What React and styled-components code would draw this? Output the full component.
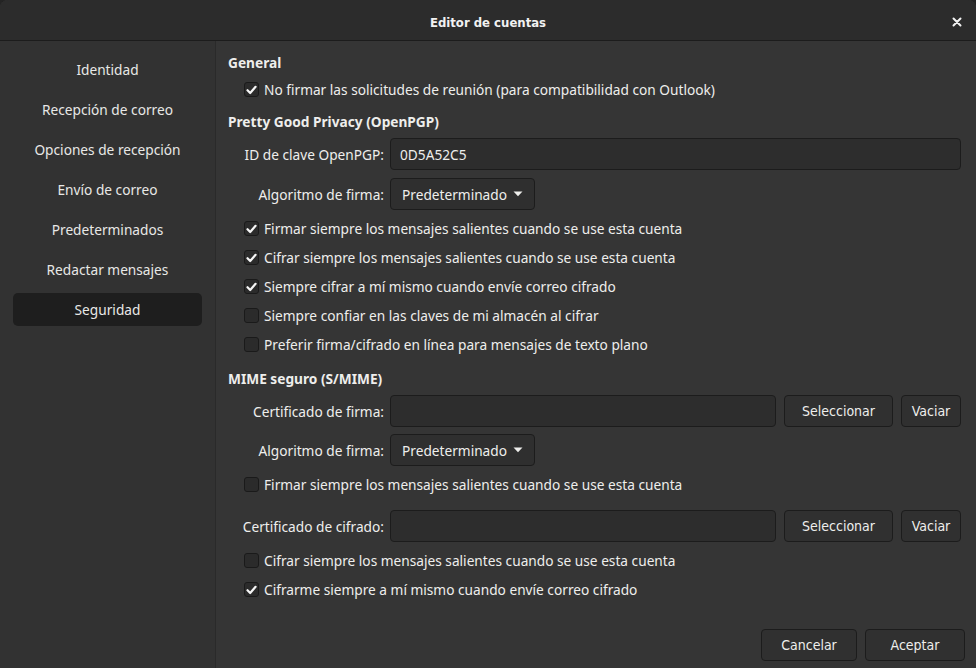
import React from 'react';
import styled, { createGlobalStyle } from 'styled-components';

const Global = createGlobalStyle`
    html, body {
        margin:0;
        padding:0;
        background:#242424;
    }
    * { box-sizing:border-box; }
`;

const Window = styled.div`
    width:976px;
    height:668px;
    display:flex;
    flex-direction:column;
    background-color:#353535;
    color:#eeeeec;
    font-family:"Noto Sans", "DejaVu Sans", sans-serif;
    font-size:13.7px;
    border-radius:8px 8px 0 0;
    overflow:hidden;
`;

const TitleBar = styled.div`
    height:41px;
    flex:none;
    display:flex;
    align-items:center;
    justify-content:center;
    padding-top:4px;
    position:relative;
    background-color:#2c2c2c;
    border-bottom:1px solid #1c1c1c;
    font-family:"DejaVu Sans Condensed", "DejaVu Sans", sans-serif;
    font-weight:bold;
    font-size:13px;
    color:#f2f2f2;
`;

const Close = styled.button`
    position:absolute;
    right:11px;
    top:14px;
    width:16px;
    height:16px;
    padding:0;
    border:none;
    background:none;
    display:flex;
    align-items:center;
    justify-content:center;
`;

const Body = styled.div`
    flex:1;
    display:flex;
    min-height:0;
`;

const Sidebar = styled.div`
    width:216px;
    flex:none;
    display:flex;
    flex-direction:column;
    gap:7px;
    padding:12px 13px 0 13px;
    background-color:#323232;
    border-right:1px solid #2a2a2a;
`;

const SideItem = styled.div`
    height:33px;
    width:189px;
    display:flex;
    align-items:center;
    justify-content:center;
    border-radius:5px;
    background-color:${({active}) => active ? '#1e1e1e' : 'transparent'};
    color:#e8e8e6;
`;

const Content = styled.div`
    flex:1;
    display:flex;
    flex-direction:column;
    padding:12px 15px 0 12px;
`;

const Heading = styled.div`
    height:20px;
    flex:none;
    line-height:20px;
    font-weight:bold;
    margin-top:${({top}) => top || 0}px;
`;

const CheckRow = styled.label`
    height:29px;
    flex:none;
    display:flex;
    align-items:center;
    gap:5px;
    padding-left:16px;
    margin-top:${({top}) => top || 0}px;
`;

const Box = styled.span`
    width:15px;
    height:15px;
    border-radius:3px;
    border:1px solid #1a1a1a;
    background-color:#2b2b2b;
    display:flex;
    align-items:center;
    justify-content:center;
`;

const FormRow = styled.div`
    height:32px;
    flex:none;
    display:flex;
    align-items:center;
    gap:6px;
    margin-top:${({top}) => top || 0}px;
`;

const Label = styled.div`
    width:148px;
    margin-left:8px;
    text-align:right;
    flex:none;
`;

const Field = styled.div`
    flex:1;
    height:32px;
    display:flex;
    align-items:center;
    padding:0 9px;
    background-color:#2d2d2d;
    border:1px solid #1c1c1c;
    border-radius:4px;
`;

const Dropdown = styled.div`
    height:32px;
    display:flex;
    align-items:center;
    gap:6px;
    padding:0 11px;
    background-color:#2f2f2f;
    border:1px solid #1c1c1c;
    border-radius:4px;
`;

const Button = styled.button`
    height:32px;
    width:${({w}) => w}px;
    flex:none;
    margin-left:${({gap}) => gap || 0}px;
    background-color:#303030;
    border:1px solid #1c1c1c;
    border-radius:4px;
    color:#eeeeec;
    font-family:"DejaVu Sans Condensed", "DejaVu Sans", sans-serif;
    font-size:14px;
`;

const Footer = styled.div`
    display:flex;
    flex:none;
    justify-content:flex-end;
    gap:8px;
    margin-top:25px;
    margin-right:-4px;
`;

const Check = ({ on }) => (
    <Box>
        {on && (
            <svg width="11" height="10" viewBox="0 0 11 10">
                <path d="M1.5 5.2 L4.2 8 L9.6 1.8" fill="none" stroke="#f5f5f5" strokeWidth="2.2" strokeLinecap="round" strokeLinejoin="round"/>
            </svg>
        )}
    </Box>
);

const CheckItem = ({ on, top, children }) => (
    <CheckRow top={top}>
        <Check on={on}/>
        <span>{children}</span>
    </CheckRow>
);

const Arrow = () => (
    <svg width="10" height="6" viewBox="0 0 10 6">
        <path d="M0.5 0.5 L9.5 0.5 L5 5.2 Z" fill="#eeeeec"/>
    </svg>
);

const sections = [
    'Identidad',
    'Recepción de correo',
    'Opciones de recepción',
    'Envío de correo',
    'Predeterminados',
    'Redactar mensajes',
    'Seguridad',
];

export default function App() {
    return (
        <>
            <Global/>
            <Window>
                <TitleBar>
                    Editor de cuentas
                    <Close>
                        <svg width="10" height="10" viewBox="0 0 10 10">
                            <path d="M1.5 1.5 L8.5 8.5 M8.5 1.5 L1.5 8.5" stroke="#f2f2f2" strokeWidth="2" strokeLinecap="round"/>
                        </svg>
                    </Close>
                </TitleBar>
                <Body>
                    <Sidebar>
                        {sections.map(s => (
                            <SideItem key={s} active={s === 'Seguridad'}>{s}</SideItem>
                        ))}
                    </Sidebar>
                    <Content>
                        <Heading>General</Heading>
                        <CheckItem on top={2}>No firmar las solicitudes de reunión (para compatibilidad con Outlook)</CheckItem>

                        <Heading top={8}>Pretty Good Privacy (OpenPGP)</Heading>
                        <FormRow top={6}>
                            <Label>ID de clave OpenPGP:</Label>
                            <Field>0D5A52C5</Field>
                        </FormRow>
                        <FormRow top={8}>
                            <Label>Algoritmo de firma:</Label>
                            <Dropdown>Predeterminado <Arrow/></Dropdown>
                        </FormRow>
                        <CheckItem on top={4}>Firmar siempre los mensajes salientes cuando se use esta cuenta</CheckItem>
                        <CheckItem on>Cifrar siempre los mensajes salientes cuando se use esta cuenta</CheckItem>
                        <CheckItem on>Siempre cifrar a mí mismo cuando envíe correo cifrado</CheckItem>
                        <CheckItem>Siempre confiar en las claves de mi almacén al cifrar</CheckItem>
                        <CheckItem>Preferir firma/cifrado en línea para mensajes de texto plano</CheckItem>

                        <Heading top={10}>MIME seguro (S/MIME)</Heading>
                        <FormRow top={6}>
                            <Label>Certificado de firma:</Label>
                            <Field/>
                            <Button w={109} gap={2}>Seleccionar</Button>
                            <Button w={60} gap={2}>Vaciar</Button>
                        </FormRow>
                        <FormRow top={7}>
                            <Label>Algoritmo de firma:</Label>
                            <Dropdown>Predeterminado <Arrow/></Dropdown>
                        </FormRow>
                        <CheckItem top={4}>Firmar siempre los mensajes salientes cuando se use esta cuenta</CheckItem>
                        <FormRow top={11}>
                            <Label>Certificado de cifrado:</Label>
                            <Field/>
                            <Button w={109} gap={2}>Seleccionar</Button>
                            <Button w={60} gap={2}>Vaciar</Button>
                        </FormRow>
                        <CheckItem top={4}>Cifrar siempre los mensajes salientes cuando se use esta cuenta</CheckItem>
                        <CheckItem on>Cifrarme siempre a mí mismo cuando envíe correo cifrado</CheckItem>

                        <Footer>
                            <Button w={96}>Cancelar</Button>
                            <Button w={100}>Aceptar</Button>
                        </Footer>
                    </Content>
                </Body>
            </Window>
        </>
    );
}
